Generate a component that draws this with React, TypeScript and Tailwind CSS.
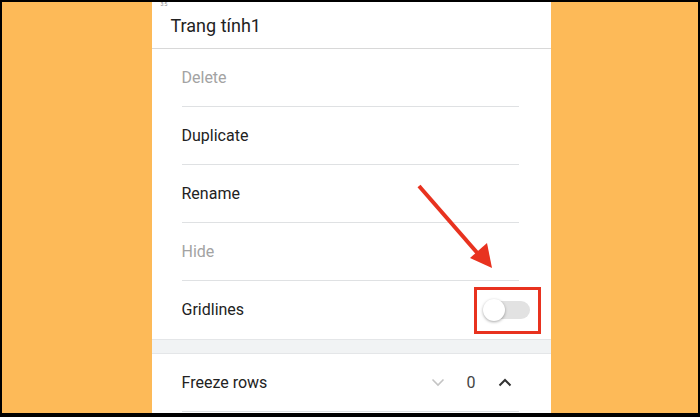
import React from 'react';

const font = { fontFamily: 'Roboto, "Noto Sans", sans-serif' };

const Row = ({ label, muted, last, children }: { label: string; muted?: boolean; last?: boolean; children?: React.ReactNode }) => (
  <div className={`h-[58px] flex items-center justify-between ${last ? '' : 'border-b border-[#dfe1e3]'}`}>
    <span className={`text-[16px] ${muted ? 'text-[#a3a3a3]' : 'text-[#222]'}`}>{label}</span>
    {children}
  </div>
);

const App = () => {
  return (
    <div className="w-[700px] h-[417px] bg-black pt-[2px] pb-[4px] px-[2px]" style={font}>
      <div className="w-full h-full bg-[#fdba58] flex justify-center pl-[2px]">
        <div className="relative w-[399px] h-full bg-white overflow-hidden">
          <div className="h-[47px] border-b border-[#d8d8d8] flex items-center pl-[19px] relative">
            <span className="absolute left-[9px] top-0 text-[5px] text-[#888] leading-none">3:5</span>
            <span className="text-[18px] text-[#222]">Trang tính1</span>
          </div>
          <div className="pl-[30px] pr-[32px]">
            <Row label="Delete" muted />
            <Row label="Duplicate" />
            <Row label="Rename" />
            <Row label="Hide" muted />
            <Row label="Gridlines" last>
              <div className="w-[67px] h-[47px] border-[3px] border-[#e8321f] flex items-center justify-center -mr-[22px]">
                <div className="relative w-[46px] h-[18px] rounded-full bg-[#e2e2e2]">
                  <div className="absolute -left-[1px] -top-[2px] w-[22px] h-[22px] rounded-full bg-white shadow-[0_1px_3px_rgba(0,0,0,0.35)]" />
                </div>
              </div>
            </Row>
          </div>
          <div className="h-[15px] bg-[#f1f3f4] border-y border-[#e4e6e8]" />
          <div className="pl-[30px] pr-[32px]">
            <Row label="Freeze rows">
              <div className="flex items-center gap-[22px] pr-[7px]">
                <svg width="14" height="9" viewBox="0 0 14 9" fill="none">
                  <path d="M1.5 1.5 L7 7 L12.5 1.5" stroke="#c4c4c4" strokeWidth="1.6" />
                </svg>
                <span className="text-[16px] text-[#444]">0</span>
                <svg width="14" height="9" viewBox="0 0 14 9" fill="none">
                  <path d="M1.5 7.5 L7 2 L12.5 7.5" stroke="#333" strokeWidth="2" />
                </svg>
              </div>
            </Row>
          </div>
          <svg className="absolute left-0 top-0 pointer-events-none" width="399" height="417" viewBox="152 2 399 417">
            <line x1="419" y1="186" x2="480" y2="256" stroke="#e8321f" strokeWidth="4" />
            <polygon points="492,268 470,258 487,243" fill="#e8321f" />
          </svg>
        </div>
      </div>
    </div>
  );
};

export default App;
